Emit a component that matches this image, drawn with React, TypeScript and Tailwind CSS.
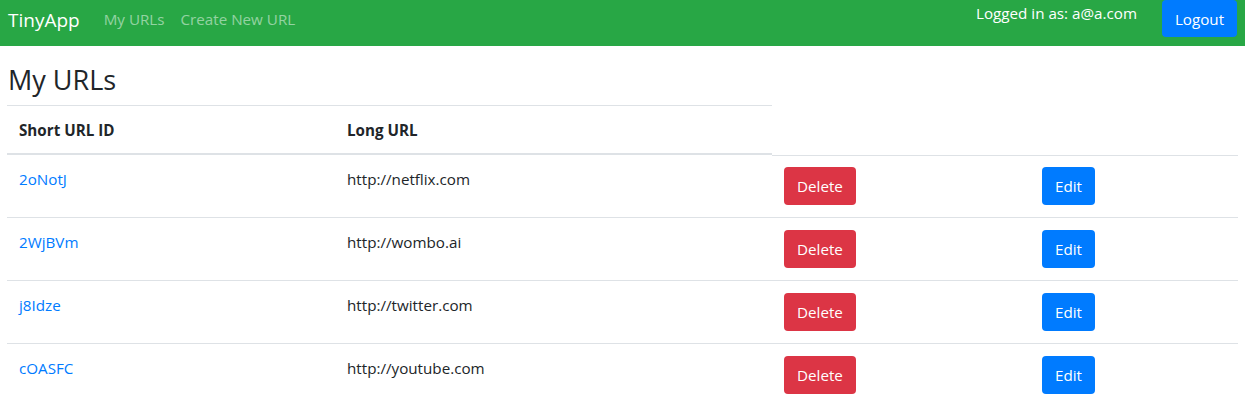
import React from "react";

const rows = [
  { id: "2oNotJ", url: "http://netflix.com" },
  { id: "2WjBVm", url: "http://wombo.ai" },
  { id: "j8Idze", url: "http://twitter.com" },
  { id: "cOASFC", url: "http://youtube.com" },
];

export default function App() {
  return (
    <div className="min-h-[414px] bg-white text-[#212529] font-['Open_Sans','Noto_Sans',sans-serif] text-[15.2px] leading-[24px]">
      <nav className="flex h-[46px] items-start bg-[#28a745] pl-[8px] pr-[8px]">
        <span className="mt-[5px] text-[19px] leading-[30px] text-white">TinyApp</span>
        <div className="ml-[16px] mt-[7px] flex">
          <a className="px-[8px] text-white/50">My URLs</a>
          <a className="px-[8px] text-white/50">Create New URL</a>
        </div>
        <div className="ml-auto flex items-start">
          <span className="mt-[1px] text-white">Logged in as: a@a.com</span>
          <button className="ml-[25px] h-[37px] w-[75px] rounded-[4px] bg-[#007bff] text-white">Logout</button>
        </div>
      </nav>
      <div className="px-[7px]">
        <h3 className="mt-[17px] mb-[8px] pl-[1px] text-[27px] leading-[34px] font-medium">My URLs</h3>
        <div className="grid grid-cols-[328px_437px_258px_208px]">
          <div className="border-t border-b-2 border-[#dee2e6] px-[12px] pt-[12px] pb-[11px] font-bold">Short URL ID</div>
          <div className="border-t border-b-2 border-[#dee2e6] px-[12px] pt-[12px] pb-[11px] font-bold">Long URL</div>
          <div />
          <div />
          {rows.map((r, i) => {
            const first = i === 0;
            const pad = first ? "px-[12px] pt-[11px] pb-[12px]" : "p-[12px]";
            return (
              <React.Fragment key={r.id}>
                <div className={(first ? "pt-[12px] px-[12px] pb-[12px] " : "border-t p-[12px] ") + "border-[#dee2e6]"}>
                  <a className="text-[#007bff]">{r.id}</a>
                </div>
                <div className={(first ? "pt-[12px] px-[12px] pb-[12px] " : "border-t p-[12px] ") + "border-[#dee2e6]"}>{r.url}</div>
                <div className={"border-t border-[#dee2e6] " + pad}>
                  <button className="h-[38px] rounded-[4px] bg-[#dc3545] px-[13px] text-white">Delete</button>
                </div>
                <div className={"border-t border-[#dee2e6] " + pad}>
                  <button className="h-[38px] rounded-[4px] bg-[#007bff] px-[13px] text-white">Edit</button>
                </div>
              </React.Fragment>
            );
          })}
        </div>
      </div>
    </div>
  );
}
